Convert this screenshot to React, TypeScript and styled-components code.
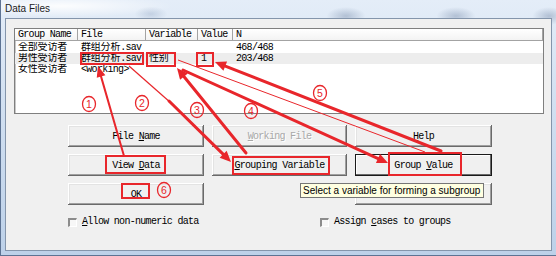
import React from "react";
import styled, { createGlobalStyle } from "styled-components";

const MONO = `"Liberation Mono", "Noto Sans CJK SC", monospace`;
const SANS = `"Liberation Sans", "Noto Sans", sans-serif`;
const RED = "#e8262b";

const Global = createGlobalStyle`
  html, body { margin: 0; padding: 0; width: 556px; height: 256px; overflow: hidden; background: #fff; }
  #root { width: 556px; height: 256px; }
`;

const Window = styled.div`
  position: relative;
  width: 556px;
  height: 256px;
  box-sizing: border-box;
  display: flex;
  flex-direction: column;
  padding: 0 4px 4px 4px;
  border-left: 1px solid #5d7393;
  border-bottom: 1px solid #5d7393;
  background:
    radial-gradient(ellipse 22px 10px at 150px 14px, rgba(140, 160, 190, 0.35), transparent 75%),
    radial-gradient(ellipse 26px 12px at 345px 16px, rgba(120, 140, 170, 0.45), transparent 75%),
    radial-gradient(ellipse 26px 12px at 455px 16px, rgba(120, 140, 170, 0.45), transparent 75%),
    radial-gradient(ellipse 22px 12px at 548px 16px, rgba(120, 140, 170, 0.45), transparent 75%),
    radial-gradient(ellipse 140px 14px at 60px 6px, rgba(255, 255, 255, 0.9), transparent 80%),
    linear-gradient(180deg, #e4edf8 0%, #d2e0f1 40%, #bdd1e9 100%);
  overflow: hidden;
`;

const TitleBar = styled.div`
  height: 18px;
  flex: none;
  font-family: ${SANS};
  font-size: 10px;
  line-height: 17px;
  color: #1b1b1b;
`;

const Client = styled.div`
  flex: 1;
  box-sizing: border-box;
  border: 1px solid #8495ab;
  background: #f0f0f0;
  padding: 9px 8px 0 8px;
  display: flex;
  flex-direction: column;
  font-family: ${MONO};
  font-size: 10px;
  letter-spacing: -0.7px;
  color: #000;
`;

const ListBox = styled.div`
  width: 530px;
  height: 86px;
  box-sizing: border-box;
  border: 1px solid #7f7f7f;
  box-shadow: inset 1px 1px 0 #c8c8c8;
  background: #fff;
  display: flex;
  flex-direction: column;
`;

const COLS = "63px 68px 52px 35px 1fr";

const HeaderRow = styled.div`
  display: grid;
  grid-template-columns: ${COLS};
  height: 12px;
`;

const HeaderCell = styled.div`
  box-sizing: border-box;
  height: 12px;
  border-right: 1px solid #a3a3a3;
  border-bottom: 1px solid #a3a3a3;
  background: linear-gradient(180deg, #ffffff, #f3f3f3);
  padding-left: 3px;
  line-height: 11px;
  white-space: nowrap;
  overflow: hidden;
`;

const Body = styled.div`
  padding-top: 1px;
  display: flex;
  flex-direction: column;
`;

const Row = styled.div<{ $selected?: boolean }>`
  display: grid;
  grid-template-columns: ${COLS};
  height: 11px;
  line-height: 11px;
  background: ${(p) => (p.$selected ? "#ededed" : "transparent")};
`;

const Cell = styled.div`
  padding-left: 3px;
  white-space: nowrap;
  overflow: hidden;
`;

const Cjk = styled.span`
  letter-spacing: -0.2px;
`;

const ButtonGrid = styled.div`
  margin: 11px 0 0 54px;
  display: grid;
  grid-template-columns: 136px 135px 137px;
  grid-template-rows: 22px 22px 22px;
  column-gap: 8px;
  row-gap: 7px;
`;

const Button = styled.div<{ $default?: boolean; $disabled?: boolean }>`
  box-sizing: border-box;
  display: flex;
  align-items: center;
  justify-content: center;
  white-space: pre;
  background: #f0f0f0;
  color: ${(p) => (p.$disabled ? "#a8a8a8" : "#000")};
  text-shadow: ${(p) => (p.$disabled ? "1px 1px 0 #ffffff" : "none")};
  box-shadow: ${(p) =>
    p.$default
      ? "inset 0 0 0 1px #1a1a1a, inset -2px -2px 0 #696969, inset 2px 2px 0 #ffffff"
      : "inset -1px -1px 0 #6a6a6a, inset 1px 1px 0 #ffffff, inset -2px -2px 0 #a0a0a0, inset 2px 2px 0 #e3e3e3"};
  padding-top: 1px;
`;

const Label = styled.span`
  white-space: pre;
`;

const Blank = styled.div``;

const U = styled.span`
  text-decoration: underline;
  text-underline-offset: 1px;
`;

const CheckRow = styled.div`
  margin: 12px 0 0 54px;
  display: flex;
  align-items: center;
  height: 10px;
`;

const CheckItem = styled.label<{ $width?: number }>`
  display: flex;
  align-items: center;
  gap: 5px;
  width: ${(p) => (p.$width ? `${p.$width}px` : "auto")};
  line-height: 10px;
`;

const Box = styled.span`
  width: 9px;
  height: 9px;
  box-sizing: border-box;
  background: #f7f7f7;
  border-top: 2px solid #8c8c8c;
  border-left: 2px solid #8c8c8c;
  border-right: 1px solid #ffffff;
  border-bottom: 1px solid #ffffff;
`;

const Tooltip = styled.div`
  position: absolute;
  left: 299px;
  top: 183px;
  width: 184px;
  height: 15px;
  box-sizing: border-box;
  border: 1px solid #767676;
  background: #ffffe1;
  font-family: ${SANS};
  font-size: 10px;
  line-height: 13px;
  padding-left: 2px;
  color: #000;
  white-space: nowrap;
`;

const Overlay = styled.svg`
  position: absolute;
  left: 0;
  top: 0;
  width: 556px;
  height: 256px;
  pointer-events: none;
`;

type ArrowProps = { x1: number; y1: number; x2: number; y2: number; w?: number; head?: number; hw?: number };

function Arrow({ x1, y1, x2, y2, w = 3, head = 11, hw = 5 }: ArrowProps) {
  const dx = x2 - x1;
  const dy = y2 - y1;
  const L = Math.hypot(dx, dy);
  const ux = dx / L;
  const uy = dy / L;
  const bx = x2 - ux * head;
  const by = y2 - uy * head;
  const px = -uy;
  const py = ux;
  return (
    <g>
      <line x1={x1} y1={y1} x2={bx + ux * 2} y2={by + uy * 2} stroke={RED} strokeWidth={w} strokeLinecap="round" />
      <polygon
        points={`${x2},${y2} ${bx + px * hw},${by + py * hw} ${bx - px * hw},${by - py * hw}`}
        fill={RED}
      />
    </g>
  );
}

const marks: [number, number, number, number][] = [
  [80, 53, 62, 11],
  [146, 53, 28, 13],
  [196, 53, 16, 13],
  [105, 156, 59, 17],
  [121, 184, 27, 14],
  [232, 157, 96, 17],
  [388, 153, 72, 22],
];

const circles: [number, number, string][] = [
  [88, 104, "1"],
  [141, 103, "2"],
  [196, 110, "3"],
  [250, 111, "4"],
  [319, 93, "5"],
  [163, 190, "6"],
];

function Annotations() {
  return (
    <Overlay viewBox="0 0 556 256">
      {marks.map(([x, y, w, h], i) => (
        <rect key={i} x={x} y={y} width={w} height={h} fill="none" stroke={RED} strokeWidth={2} />
      ))}
      <line x1={177} y1={60} x2={424} y2={152} stroke={RED} strokeWidth={1} />
      <line x1={128} y1={66} x2={170} y2={103} stroke={RED} strokeWidth={1.2} />
      <Arrow x1={123} y1={156} x2={97} y2={66} w={2} head={11} hw={4.5} />
      <Arrow x1={168} y1={101} x2={230} y2={162} w={3} />
      <Arrow x1={245} y1={153} x2={176} y2={68} w={3} />
      <Arrow x1={182} y1={70} x2={387} y2={163} w={3} />
      <Arrow x1={440} y1={151} x2={214} y2={62} w={3} />
      {circles.map(([cx, cy, t]) => (
        <g key={t}>
          <ellipse cx={cx} cy={cy} rx={6.5} ry={7.5} fill="none" stroke={RED} strokeWidth={1.3} />
          <text
            x={cx}
            y={cy + 3.8}
            textAnchor="middle"
            fontFamily={`"Liberation Sans", sans-serif`}
            fontSize={10.5}
            fill={RED}
          >
            {t}
          </text>
        </g>
      ))}
    </Overlay>
  );
}

export default function App() {
  return (
    <>
      <Global />
      <Window>
        <TitleBar>Data Files</TitleBar>
        <Client>
          <ListBox>
            <HeaderRow>
              <HeaderCell>Group Name</HeaderCell>
              <HeaderCell>File</HeaderCell>
              <HeaderCell>Variable</HeaderCell>
              <HeaderCell>Value</HeaderCell>
              <HeaderCell>N</HeaderCell>
            </HeaderRow>
            <Body>
              <Row>
                <Cell><Cjk>全部受访者</Cjk></Cell>
                <Cell><Cjk>群组分析</Cjk>.sav</Cell>
                <Cell></Cell>
                <Cell></Cell>
                <Cell>468/468</Cell>
              </Row>
              <Row $selected>
                <Cell><Cjk>男性受访者</Cjk></Cell>
                <Cell><Cjk>群组分析</Cjk>.sav</Cell>
                <Cell><Cjk>性别</Cjk></Cell>
                <Cell>1</Cell>
                <Cell>203/468</Cell>
              </Row>
              <Row>
                <Cell><Cjk>女性受访者</Cjk></Cell>
                <Cell>&lt;working&gt;</Cell>
                <Cell></Cell>
                <Cell></Cell>
                <Cell></Cell>
              </Row>
            </Body>
          </ListBox>
          <ButtonGrid>
            <Button><Label>File <U>N</U>ame</Label></Button>
            <Button $disabled><Label><U>W</U>orking File</Label></Button>
            <Button><Label><U>H</U>elp</Label></Button>
            <Button><Label>View <U>D</U>ata</Label></Button>
            <Button><Label><U>G</U>rouping Variable</Label></Button>
            <Button $default><Label>Group <U>V</U>alue</Label></Button>
            <Button><Label>OK</Label></Button>
            <Blank />
            <Button />
          </ButtonGrid>
          <CheckRow>
            <CheckItem $width={252}>
              <Box />
              <span><U>A</U>llow non-numeric data</span>
            </CheckItem>
            <CheckItem>
              <Box />
              <span>Assign <U>c</U>ases to groups</span>
            </CheckItem>
          </CheckRow>
        </Client>
        <Tooltip>Select a variable for forming a subgroup</Tooltip>
        <Annotations />
      </Window>
    </>
  );
}
